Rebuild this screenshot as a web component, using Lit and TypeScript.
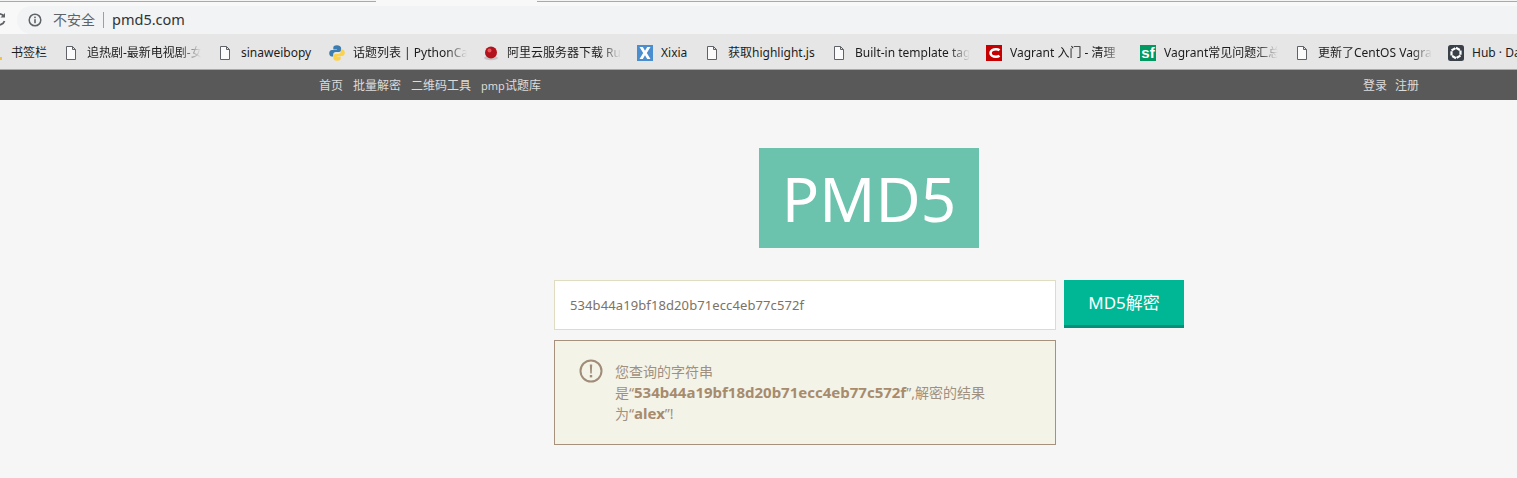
import { LitElement, html, css, svg } from 'lit';
import { customElement } from 'lit/decorators.js';

type Fav = 'folder' | 'doc' | 'python' | 'aliyun' | 'x' | 'c' | 'sf' | 'hub';

interface Bookmark {
  icon: Fav;
  label: string;
  width: number;
  fade?: boolean;
}

const BOOKMARKS: Bookmark[] = [
  { icon: 'folder', label: '书签栏', width: 36 },
  { icon: 'doc', label: '追热剧-最新电视剧-女', width: 114, fade: true },
  { icon: 'doc', label: 'sinaweibopy', width: 72 },
  { icon: 'python', label: '话题列表 | PythonCat', width: 114, fade: true },
  { icon: 'aliyun', label: '阿里云服务器下载 Ruby', width: 114, fade: true },
  { icon: 'x', label: 'Xixia', width: 27 },
  { icon: 'doc', label: '获取highlight.js', width: 87 },
  { icon: 'doc', label: 'Built-in template tags', width: 115, fade: true },
  { icon: 'c', label: 'Vagrant 入门 - 清理', width: 114, fade: true },
  { icon: 'sf', label: 'Vagrant常见问题汇总', width: 114, fade: true },
  { icon: 'doc', label: '更新了CentOS Vagrant', width: 114, fade: true },
  { icon: 'hub', label: 'Hub · Dashboard', width: 90 },
];

const favicons: Record<Fav, unknown> = {
  // only the lower right corner of the folder is on screen
  folder: svg`<path d="M1 5h11v7h3v3H1z" fill="#f5c33b"/>`,
  doc: svg`<path d="M3.500 1.500h6l3 3v10h-9z M9.500 1.500v3h3" fill="#fbfbfb" stroke="#5f6368" stroke-width="1"/>`,
  python: svg`
    <path d="M8 .2C5 .2 4.300 1.400 4.300 2.700v1.800H8V5H2.900C1.200 5 .2 6.300 .2 8.200s1 3.200 2.500 3.200h1.500V9.500c0-1.400 1.100-2.500 2.500-2.500h3.400c1.100 0 2-.9 2-2V2.700C11.600 1.400 10.300 .2 8 .2z" fill="#3d7cb0"/>
    <path d="M8 15.800c3 0 3.700-1.200 3.700-2.500v-1.800H8V11h5.100c1.700 0 2.700-1.300 2.700-3.200s-1-3.200-2.500-3.200h-1.500v1.900c0 1.400-1.100 2.500-2.500 2.500H6.400c-1.100 0-2 .9-2 2v2.300c0 1.300 1.300 2.500 3.600 2.500z" fill="#fbd24a"/>`,
  aliyun: svg`
    <ellipse cx="8" cy="13" rx="7" ry="2.200" fill="#c4c4c4"/>
    <circle cx="8" cy="7.500" r="6" fill="#b3131c"/>
    <circle cx="6.500" cy="5.500" r="2" fill="#e4545a"/>`,
  x: svg`
    <rect width="16" height="16" fill="#4a8ed0"/>
    <path d="M2.500 2h3.300L8 5.700 10.200 2h3.300L9.800 8l3.700 6h-3.300L8 10.300 5.800 14H2.500l3.700-6z" fill="#fff"/>`,
  c: svg`
    <rect width="16" height="16" fill="#c60000"/>
    <path d="M13.500 5.300C12.500 4.500 11.300 4.200 10 4.200 6.800 4.200 4.500 5.800 4.500 8s2.300 3.800 5.500 3.800c1.300 0 2.500-.3 3.500-1.100" fill="none" stroke="#fff" stroke-width="2.600"/>`,
  sf: svg`
    <rect width="16" height="16" fill="#009a61"/>
    <text x="8" y="13" text-anchor="middle" font-family="'Liberation Sans', sans-serif" font-size="15" font-weight="700" fill="#fff">sf</text>`,
  hub: svg`
    <rect width="16" height="16" rx="2.500" fill="#3a4149"/>
    <path d="M8 2.800l4.500 2.600v5.200L8 13.200l-4.500-2.600V5.400z" fill="none" stroke="#fff" stroke-width="2.200" stroke-dasharray="4.400 .8"/>`,
};

@customElement('app-root')
export class AppRoot extends LitElement {
  static styles = css`
    :host {
      display: block;
      width: 1517px;
      height: 478px;
      overflow: hidden;
      background: #f6f6f6;
      font-family: 'Noto Sans', 'Noto Sans CJK SC', sans-serif;
    }

    .tabstrip {
      display: flex;
      height: 2px;
      background: #f8f8f8;
    }
    .tabstrip .line {
      flex: 1;
      border-top: 1px solid #f4f4f4;
      border-bottom: 1px solid #a9a9a9;
    }
    .tabstrip .line.first {
      flex: none;
      width: 376px;
    }
    .tabstrip .active {
      width: 161px;
    }

    .toolbar {
      height: 32px;
      background: #f8f8f8;
      padding: 4px 0 0 17px;
      box-sizing: border-box;
      display: flex;
      position: relative;
    }
    .reload {
      position: absolute;
      left: -8px;
      top: 10px;
    }
    .omnibox {
      flex: 1;
      display: flex;
      align-items: center;
      background: #f1f3f4;
      border-radius: 14px 0 0 14px;
      padding: 0 0 1px 11px;
    }
    .omnibox svg {
      flex: none;
    }
    .secure {
      margin: 0 0 2px 11px;
      font-size: 14px;
      color: #5f6368;
    }
    .divider {
      width: 1px;
      height: 16px;
      background: #9aa0a6;
      margin: 0 8px;
    }
    .url {
      margin-bottom: 2px;
      font-size: 14.500px;
      color: #303336;
    }

    .bookmarks {
      height: 36px;
      box-sizing: border-box;
      background: #e6e6e6;
      border-bottom: 1px solid #aaaaaa;
      display: flex;
      align-items: center;
      gap: 16px;
      overflow: hidden;
      padding-top: 2px;
    }
    .bookmark {
      display: flex;
      align-items: center;
      gap: 8px;
      flex: none;
    }
    .bookmark:first-child {
      margin-left: -13px;
    }
    .bookmark svg {
      flex: none;
      display: block;
    }
    .bookmark span {
      font-size: 12px;
      color: #1c1c1c;
      white-space: nowrap;
      overflow: hidden;
      line-height: 18px;
    }
    .bookmark span.fade {
      -webkit-mask-image: linear-gradient(to right, #000 82%, transparent);
      mask-image: linear-gradient(to right, #000 82%, transparent);
    }

    nav {
      height: 30px;
      background: #595959;
      display: flex;
      align-items: center;
      justify-content: space-between;
      padding: 0 98px 0 319px;
      font-size: 12px;
      color: #dcdcdc;
    }
    nav div {
      display: flex;
      align-items: baseline;
    }
    .left {
      gap: 10px;
    }
    .right {
      gap: 8px;
    }
    .latin {
      font-size: 11px;
    }

    main {
      width: 630px;
      margin-left: 554px;
      padding-top: 48px;
      display: flex;
      flex-direction: column;
    }
    .logo {
      align-self: center;
      width: 220px;
      height: 100px;
      display: flex;
      align-items: center;
      justify-content: center;
      background: #6bc3ad;
      color: #fff;
      font-size: 62px;
      font-weight: 400;
    }
    .search {
      display: flex;
      gap: 8px;
      align-items: flex-start;
      margin-top: 32px;
    }
    .field {
      width: 502px;
      height: 50px;
      box-sizing: border-box;
      border: 1px solid #dfdcbf;
      background: #fff;
      padding-left: 15px;
      display: flex;
      align-items: center;
      font-size: 13px;
      letter-spacing: 0.1px;
      color: #7d7263;
    }
    .submit {
      width: 120px;
      height: 48px;
      box-sizing: border-box;
      background: #00b795;
      border-bottom: 3px solid #008f79;
      padding-bottom: 2px;
      color: #fff;
      font-size: 17px;
      display: flex;
      align-items: center;
      justify-content: center;
    }
    .notice {
      width: 502px;
      height: 105px;
      box-sizing: border-box;
      margin-top: 10px;
      border: 1px solid #a5917c;
      background: #f4f3e8;
      padding: 18px 0 0 24px;
      display: flex;
      gap: 12px;
      font-size: 14px;
      line-height: 21px;
      color: #a09080;
    }
    .notice svg {
      flex: none;
    }
    .notice p {
      margin: 2px 0 0;
      width: 376px;
    }
    .notice b {
      font-size: 15px;
      line-height: 1;
      color: #a68b6e;
    }
  `;

  private renderBookmark(b: Bookmark) {
    return html`
      <div class="bookmark">
        <svg width="16" height="16" viewBox="0 0 16 16">${favicons[b.icon]}</svg>
        <span class=${b.fade ? 'fade' : ''} style="width: ${b.width}px">${b.label}</span>
      </div>
    `;
  }

  render() {
    return html`
      <div class="tabstrip">
        <div class="line first"></div>
        <div class="active"></div>
        <div class="line"></div>
      </div>
      <div class="toolbar">
        <svg class="reload" width="14" height="14" viewBox="0 0 14 14">
          <path d="M12 4.500A5.500 5.500 0 1 0 12.500 9" fill="none" stroke="#5f6368" stroke-width="1.800"/>
          <path d="M13 1v4.500H8.500z" fill="#5f6368"/>
        </svg>
        <div class="omnibox">
          <svg width="14" height="14" viewBox="0 0 14 14">
            <circle cx="7" cy="7" r="5.800" fill="none" stroke="#5f6368" stroke-width="1.500"/>
            <rect x="6.200" y="6.200" width="1.600" height="4" fill="#5f6368"/>
            <rect x="6.200" y="3.600" width="1.600" height="1.600" fill="#5f6368"/>
          </svg>
          <span class="secure">不安全</span>
          <span class="divider"></span>
          <span class="url">pmd5.com</span>
        </div>
      </div>
      <div class="bookmarks">${BOOKMARKS.map((b) => this.renderBookmark(b))}</div>
      <nav>
        <div class="left">
          <span>首页</span><span>批量解密</span><span>二维码工具</span><span><span class="latin">pmp</span>试题库</span>
        </div>
        <div class="right"><span>登录</span><span>注册</span></div>
      </nav>
      <main>
        <div class="logo">PMD5</div>
        <div class="search">
          <div class="field">534b44a19bf18d20b71ecc4eb77c572f</div>
          <div class="submit">MD5解密</div>
        </div>
        <div class="notice">
          <svg width="24" height="24" viewBox="0 0 24 24">
            <circle cx="12" cy="12" r="10.500" fill="none" stroke="#a08c78" stroke-width="2"/>
            <path d="M10.800 5.500h2.400l-.5 9h-1.400z" fill="#a08c78"/>
            <rect x="10.800" y="16" width="2.400" height="2.400" fill="#a08c78"/>
          </svg>
          <p>您查询的字符串是“<b>534b44a19bf18d20b71ecc4eb77c572f</b>”,解密的结果为“<b>alex</b>”!</p>
        </div>
      </main>
    `;
  }
}
